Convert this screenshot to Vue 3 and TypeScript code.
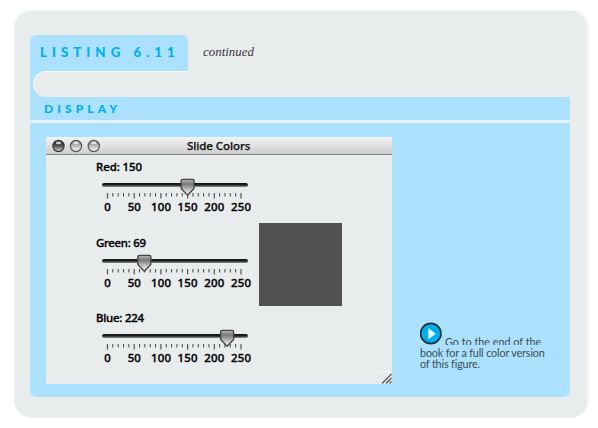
<script setup lang="ts">
interface Channel {
  name: string
  value: number
}

const channels: Channel[] = [
  { name: 'Red', value: 150 },
  { name: 'Green', value: 69 },
  { name: 'Blue', value: 224 },
]

const labelWidths: Record<string, number> = { Red: 46, Green: 50, Blue: 48 }
const ticks = Array.from({ length: 26 }, (_, i) => i * 10)
const majors = [0, 50, 100, 150, 200, 250]
const xFor = (v: number): number => 12.5 + v * 0.534
const numberWidth = (v: number): number => (v === 0 ? 6.5 : v === 50 ? 13 : 20)
</script>

<template>
  <main class="panel">
    <header class="top">
      <h1 class="tab">LISTING 6.11</h1>
      <em class="continued">continued</em>
    </header>
    <div class="notch"><div class="notch-fill"></div></div>
    <h2 class="display">DISPLAY</h2>
    <section class="body">
      <div class="window">
        <div class="titlebar">
          <svg class="lights" width="50" height="16" viewBox="0 0 50 16">
            <defs>
              <linearGradient id="dark" x2="0" y2="1">
                <stop offset="0" stop-color="#222" />
                <stop offset=".5" stop-color="#555" />
                <stop offset="1" stop-color="#ddd" />
              </linearGradient>
              <linearGradient id="light" x2="0" y2="1">
                <stop offset="0" stop-color="#777" />
                <stop offset=".45" stop-color="#b5b5b5" />
                <stop offset="1" stop-color="#fff" />
              </linearGradient>
            </defs>
            <g v-for="(cx, i) in [7.5, 25, 42.8]" :key="cx">
              <circle :cx="cx" cy="8" r="5.6" :fill="i === 0 ? 'url(#dark)' : 'url(#light)'" :stroke="i === 0 ? '#333' : '#555'" stroke-width="1.2" />
              <ellipse :cx="cx" cy="4.9" rx="2.6" ry="1.3" fill="#fff" opacity=".75" />
            </g>
          </svg>
          <span class="title">Slide Colors</span>
        </div>
        <div class="content">
          <div class="sliders">
            <svg v-for="c in channels" :key="c.name" class="slider" width="160" height="75.5" viewBox="0 0 160 75.5">
              <defs>
                <linearGradient :id="'track' + c.name" x2="0" y2="1">
                  <stop offset="0" stop-color="#111" />
                  <stop offset=".5" stop-color="#222" />
                  <stop offset="1" stop-color="#999" />
                </linearGradient>
                <linearGradient :id="'thumb' + c.name" x2="0" y2="1">
                  <stop offset="0" stop-color="#bbb" />
                  <stop offset=".3" stop-color="#777" />
                  <stop offset=".7" stop-color="#ccc" />
                  <stop offset="1" stop-color="#f2f2f2" />
                </linearGradient>
              </defs>
              <text x="1" y="12.7" :textLength="labelWidths[c.name]" class="label">{{ c.name }}: {{ c.value }}</text>
              <rect x="7" y="25" width="146" height="4" rx="2" :fill="`url(#track${c.name})`" />
              <line
                v-for="t in ticks"
                :key="t"
                :x1="xFor(t)"
                :x2="xFor(t)"
                y1="35"
                :y2="t % 50 ? 38.5 : 40.5"
                :stroke="t % 50 ? '#444' : '#555'"
                :stroke-width="t % 50 ? 1 : 1.2"
              />
              <path
                :transform="`translate(${xFor(c.value)} 0)`"
                d="M-5 21.3H5Q6.5 21.3 6.5 23V30.5L0 37.3L-6.5 30.5V23Q-6.5 21.3 -5 21.3Z"
                :fill="`url(#thumb${c.name})`"
                stroke="#444"
                stroke-width="1.3"
              />
              <text
                v-for="m in majors"
                :key="m"
                :x="xFor(m)"
                y="53"
                text-anchor="middle"
                :textLength="numberWidth(m)"
                class="number"
              >{{ m }}</text>
            </svg>
          </div>
          <div class="swatch"></div>
          <svg class="grip" width="14" height="14" viewBox="0 0 14 14">
            <path d="M4 13.5L13.5 4M8 13.5L13.5 8M11.5 13.5L13.5 11.5" stroke="#555" stroke-width="1.2" />
            <path d="M2 1.5H12" stroke="#fff" stroke-dasharray="3 1" />
          </svg>
        </div>
      </div>
      <aside class="note">
        <div class="first">
          <svg width="24" height="24" viewBox="0 0 24 24">
            <circle cx="10.8" cy="11.5" r="10.2" fill="#00aeef" stroke="#22313a" stroke-width="1.7" />
            <path d="M8.3 6L15.8 11.7L8.3 17.5Z" fill="#e2f6ff" />
          </svg>
          <span class="clip">Go to the end of the</span>
        </div>
        <div class="second">book for a full color version</div>
        <div class="third">of this figure.</div>
      </aside>
    </section>
  </main>
</template>

<style>
body {
  margin: 0;
  background: #fff;
}
</style>

<style scoped>
.panel {
  box-sizing: border-box;
  width: 575px;
  height: 408px;
  margin: 10px 0 0 14px;
  border: 1px solid #f3f6f6;
  border-width: 1px 2px 1px 1px;
  border-radius: 17px;
  background: #e8eced;
  display: flex;
  flex-direction: column;
  padding: 24px 17px 0 15px;
}
.top {
  display: flex;
  height: 36px;
}
.tab,
.display {
  margin: 0;
  font-family: Lato, sans-serif;
  font-weight: 900;
  color: #00aeef;
  white-space: nowrap;
  background: #abe1fc;
}
.tab {
  box-sizing: border-box;
  width: 158px;
  padding-left: 10px;
  border-radius: 6px 6px 0 0;
  font-size: 13.3px;
  line-height: 34px;
  letter-spacing: 5px;
}
.continued {
  padding-left: 15px;
  font: italic 12.8px/34px "Liberation Serif", serif;
  letter-spacing: 0.05px;
  color: #3b3436;
}
.notch {
  height: 26px;
  width: 50px;
  background: #abe1fc;
}
.notch-fill {
  box-sizing: border-box;
  height: 26px;
  margin-left: 3px;
  border-top: 1px solid #f6fafb;
  border-left: 1px solid #f6fafb;
  border-radius: 13px 0 0 13px;
  width: 155px;
  background: #e8eced;
}
.display {
  height: 23px;
  padding-left: 14px;
  font-size: 12px;
  line-height: 24px;
  letter-spacing: 4.1px;
}
.body {
  box-sizing: border-box;
  height: 277px;
  padding: 14px 0 0 16px;
  border-top: 3px solid #e4f2f8;
  border-radius: 0 0 7px 7px;
  background: #abe1fc;
  display: flex;
}
.window {
  width: 346px;
  height: 247px;
  background: #e8eced;
}
.titlebar {
  box-sizing: border-box;
  height: 18px;
  border-bottom: 1px solid #858585;
  border-radius: 3px 3px 0 0;
  background: linear-gradient(#f3f3f3, #cecece);
  display: flex;
  align-items: center;
}
.lights {
  margin-left: 5px;
  margin-top: 1px;
}
.title {
  margin-left: 86px;
  font: 500 11.5px/17px "Noto Sans", sans-serif;
  color: #111;
  -webkit-text-stroke: 0.25px #111;
  letter-spacing: -0.08px;
  white-space: nowrap;
}
.content {
  height: 229px;
  display: flex;
}
.sliders {
  width: 164px;
  padding: 3px 0 0 49px;
}
.slider {
  display: block;
}
.label,
.number {
  font: 500 11.4px "Noto Sans", sans-serif;
  fill: #000;
  stroke: #000;
  stroke-width: 0.35px;
}
.swatch {
  width: 83px;
  height: 83px;
  margin-top: 68px;
  background: #525152;
  flex: none;
}
.grip {
  margin-left: auto;
  align-self: flex-end;
}
.note {
  margin: 185px 0 0 28px;
  font: 10.8px/11px Lato, sans-serif;
  letter-spacing: -0.15px;
  color: #3d4d57;
  white-space: nowrap;
}
.first {
  display: flex;
  height: 25px;
}
.clip {
  height: 9px;
  margin: 14px 0 0 1px;
  overflow: hidden;
  letter-spacing: 0;
}
.second,
.third {
  height: 11px;
}
</style>
